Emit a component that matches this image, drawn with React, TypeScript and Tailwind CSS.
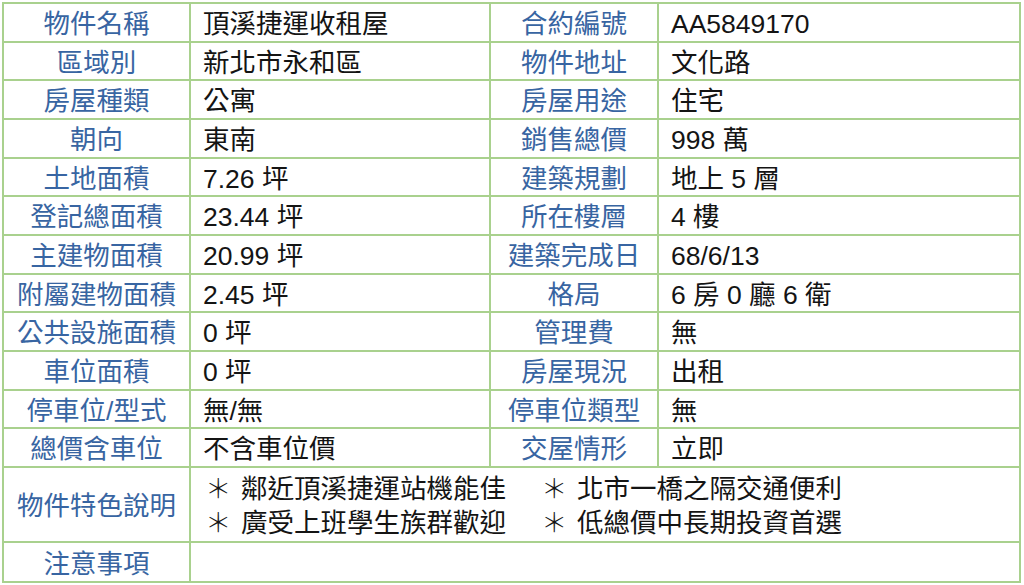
const rows: [string, string, string, string][] = [
  ["物件名稱", "頂溪捷運收租屋", "合約編號", "AA5849170"],
  ["區域別", "新北市永和區", "物件地址", "文化路"],
  ["房屋種類", "公寓", "房屋用途", "住宅"],
  ["朝向", "東南", "銷售總價", "998 萬"],
  ["土地面積", "7.26 坪", "建築規劃", "地上 5 層"],
  ["登記總面積", "23.44 坪", "所在樓層", "4 樓"],
  ["主建物面積", "20.99 坪", "建築完成日", "68/6/13"],
  ["附屬建物面積", "2.45 坪", "格局", "6 房 0 廳 6 衛"],
  ["公共設施面積", "0 坪", "管理費", "無"],
  ["車位面積", "0 坪", "房屋現況", "出租"],
  ["停車位/型式", "無/無", "停車位類型", "無"],
  ["總價含車位", "不含車位價", "交屋情形", "立即"],
];

const features = [
  ["鄰近頂溪捷運站機能佳", "北市一橋之隔交通便利"],
  ["廣受上班學生族群歡迎", "低總價中長期投資首選"],
];

function Label({ children }: { children: React.ReactNode }) {
  return (
    <div className="bg-white flex items-center justify-center pt-[4px] text-[#3865a2] whitespace-nowrap">
      {children}
    </div>
  );
}

function Value({ children, className = "" }: { children?: React.ReactNode; className?: string }) {
  return (
    <div className={`bg-white flex items-center pl-[12px] pt-[4px] text-[#141414] whitespace-nowrap ${className}`}>
      {children}
    </div>
  );
}

export default function App() {
  return (
    <div
      className="w-[1024px] h-[585px] bg-white pt-[2px] pl-[2px] text-[26.5px] leading-none"
      style={{ fontFamily: '"Liberation Sans", "Noto Sans CJK TC", sans-serif' }}
    >
      <div className="w-[1019px] bg-[#a9d18e] p-[2px] grid gap-[2px] grid-cols-[185px_298px_166px_360px] grid-rows-[repeat(12,36.67px)_73px_38px]">
        {rows.map(([a, b, c, d]) => (
          <div key={a} className="contents">
            <Label>{a}</Label>
            <Value>{b}</Value>
            <Label>{c}</Label>
            <Value>{d}</Value>
          </div>
        ))}
        <Label>物件特色說明</Label>
        <Value className="col-span-3 flex-col items-start justify-center gap-[7px]">
          {features.map((line, i) => (
            <div key={i} className="flex">
              {line.map((t, j) => (
                <div key={j} className={`flex ${j === 0 ? "w-[336px]" : ""}`}>
                  <span className="w-[38px] pl-[2px] font-light">＊</span>
                  <span>{t}</span>
                </div>
              ))}
            </div>
          ))}
        </Value>
        <Label>注意事項</Label>
        <Value className="col-span-3" />
      </div>
    </div>
  );
}
